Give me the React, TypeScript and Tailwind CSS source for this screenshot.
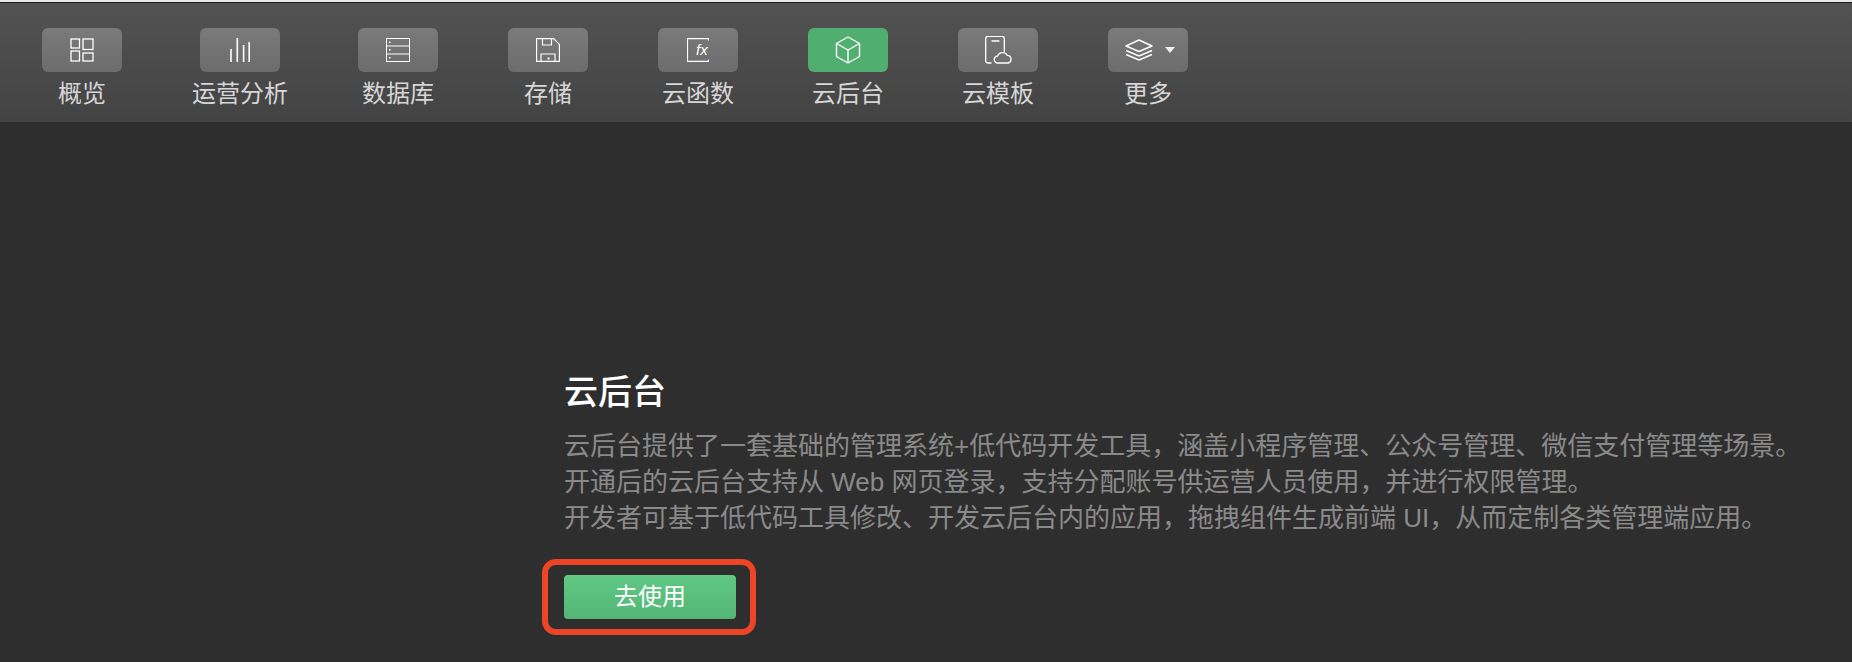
const OverviewIcon = () => (
  <svg width="24" height="24" viewBox="0 0 24 24" fill="none" stroke="currentColor" strokeWidth="1.3">
    <rect x="1" y="1" width="8.5" height="9" />
    <rect x="13" y="1" width="10" height="10.5" />
    <rect x="1" y="13" width="8.5" height="10" />
    <rect x="13" y="15" width="10" height="8" />
  </svg>
);

const ChartIcon = () => (
  <svg width="20" height="24" viewBox="0 0 20 24" fill="none" stroke="currentColor" strokeWidth="1.6">
    <path d="M1 11v13" />
    <path d="M7.300 0v24" />
    <path d="M13.600 7v17" />
    <path d="M19.200 4v20" />
  </svg>
);

const DatabaseIcon = () => (
  <svg width="24" height="24" viewBox="0 0 24 24" fill="none" stroke="currentColor" strokeWidth="1">
    <rect x="0.500" y="0.500" width="23" height="23" />
    <path d="M0.500 8h23" />
    <path d="M0.500 16h23" />
    <rect x="3" y="3.500" width="1.500" height="1.500" fill="currentColor" stroke="none" />
    <rect x="3" y="11" width="1.500" height="1.500" fill="currentColor" stroke="none" />
    <rect x="3" y="19" width="1.500" height="1.500" fill="currentColor" stroke="none" />
  </svg>
);

const SaveIcon = () => (
  <svg width="24" height="24" viewBox="0 0 24 24" fill="none" stroke="currentColor" strokeWidth="1.200">
    <path d="M0.600 0.600h17l5.800 5.800v17h-22.800z" />
    <path d="M6.500 0.600v6.400h9v-6.400" />
    <path d="M5 23.400v-7.400h14v7.400" />
    <rect x="11.500" y="19.500" width="2" height="2" fill="currentColor" stroke="none" />
  </svg>
);

const FunctionIcon = () => (
  <svg width="22" height="24" viewBox="0 0 22 24" fill="none" stroke="currentColor" strokeWidth="1.200">
    <path d="M21.500 2.500v-1.900h-21v22.800h21v-1.900" />
    <text x="9" y="17" fontSize="15" fontStyle="italic" fill="currentColor" stroke="none" fontFamily="'Liberation Sans', sans-serif">fx</text>
  </svg>
);

const CubeIcon = () => (
  <svg width="26" height="28" viewBox="0 0 26 28" fill="none" stroke="currentColor" strokeWidth="1.400" strokeLinejoin="round">
    <path d="M13 1l11.500 6.500v13l-11.500 6.500-11.500-6.500v-13z" />
    <path d="M1.500 7.500l11.500 6.500 11.500-6.500" />
    <path d="M13 14v13" />
  </svg>
);

const TemplateIcon = () => (
  <svg width="27" height="28" viewBox="0 0 27 28" fill="none" stroke="currentColor" strokeWidth="1.300" strokeLinecap="round" strokeLinejoin="round">
    <path d="M6 27h-3a2.300 2.300 0 0 1-2.300-2.300v-22a2.300 2.300 0 0 1 2.300-2.300h14a2.300 2.300 0 0 1 2.300 2.300v13" />
    <path d="M7 5h7" />
    <path d="M13 27a3.500 3.500 0 0 1-.5-7 5.500 5.500 0 0 1 9.800-.7 3.900 3.900 0 0 1 .7 7.700z" />
  </svg>
);

const LayersIcon = () => (
  <svg width="28" height="22" viewBox="0 0 28 22" fill="none" stroke="currentColor" strokeWidth="1.400" strokeLinejoin="round">
    <path d="M14 1l13 6-13 5.500-13-5.500z" />
    <path d="M1 11.500l13 5.500 13-5.500" />
    <path d="M1 15.500l13 5.500 13-5.500" />
  </svg>
);

const tabs = [
  { label: "概览", icon: <OverviewIcon /> },
  { label: "运营分析", icon: <ChartIcon /> },
  { label: "数据库", icon: <DatabaseIcon /> },
  { label: "存储", icon: <SaveIcon /> },
  { label: "云函数", icon: <FunctionIcon /> },
  { label: "云后台", icon: <CubeIcon />, active: true },
  { label: "云模板", icon: <TemplateIcon /> },
  {
    label: "更多",
    icon: (
      <div className="ml-[3px] flex items-center gap-[12px]">
        <LayersIcon />
        <div className="h-0 w-0 border-x-[5px] border-t-[6px] border-x-transparent border-t-white/90" />
      </div>
    ),
  },
];

export default function App() {
  return (
    <div className="flex h-[662px] w-[1852px] flex-col overflow-hidden bg-[#2e2e2e] font-['Liberation_Sans','Noto_Sans_CJK_SC',sans-serif]">
      <div className="h-[2px] bg-[#e8e8e8]" />
      <div className="h-px bg-[#1c1c1c]" />
      <div className="flex h-[119px] gap-[70px] bg-[linear-gradient(180deg,#525252_0%,#434343_100%)] pl-[42px] pt-[25px]">
        {tabs.map((tab) => (
          <div key={tab.label} className="flex w-fit min-w-[80px] flex-col items-center">
            <div
              className={`flex h-[44px] w-[80px] items-center justify-center rounded-[6px] text-white ${
                tab.active ? "bg-[#4fae70]" : "bg-[linear-gradient(180deg,#7a7a7a_0%,#6c6c6c_100%)]"
              }`}
            >
              {tab.icon}
            </div>
            <span className="mt-[4px] whitespace-nowrap text-[24px] leading-[36px] text-[#d6d6d6]">{tab.label}</span>
          </div>
        ))}
      </div>

      <div className="flex flex-col items-start pl-[564px] pt-[248px]">
        <h1 className="text-[34px] font-medium leading-[44px] text-white">云后台</h1>
        <p className="mt-[14px] whitespace-nowrap text-[26px] leading-[36px] text-[#8a8a8a]">
          云后台提供了一套基础的管理系统+低代码开发工具，涵盖小程序管理、公众号管理、微信支付管理等场景。
          <br />
          开通后的云后台支持从 Web 网页登录，支持分配账号供运营人员使用，并进行权限管理。
          <br />
          开发者可基于低代码工具修改、开发云后台内的应用，拖拽组件生成前端 UI，从而定制各类管理端应用。
        </p>
        <div className="ml-[-22px] mt-[23px] rounded-[14px] border-[6px] border-[#ee4426] pl-[16px] pr-[14px] py-[10px]">
          <button
            type="button"
            className="flex h-[44px] w-[172px] items-center justify-center rounded-[4px] bg-[linear-gradient(180deg,#5fc884_0%,#54b576_100%)] text-[24px] text-white"
          >
            去使用
          </button>
        </div>
      </div>
    </div>
  );
}
